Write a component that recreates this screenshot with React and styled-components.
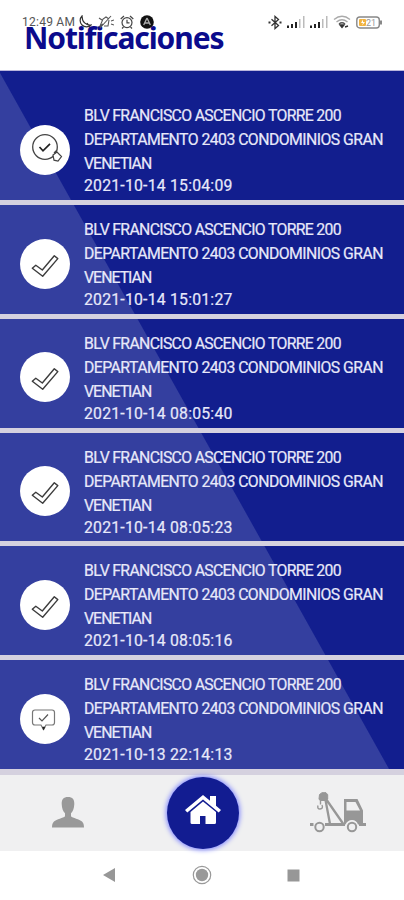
import React from 'react';
import styled, { createGlobalStyle } from 'styled-components';

const Global = createGlobalStyle`
  * { box-sizing: border-box; }
  body { margin: 0; background: #fff; font-family: Roboto, "Liberation Sans", sans-serif; }
  svg { display: block; flex: none; }
`;
const Screen = styled.div`
  width: 404px; height: 900px; display: flex; flex-direction: column;
  position: relative; overflow: hidden; background: #fff;
`;
const StatusBar = styled.div`
  position: absolute; inset: 0 0 auto 0; height: 44px; padding: 0 21px 0 22px;
  display: flex; align-items: center; color: #555;
`;
const Clock = styled.span`
  font: 400 12px/16px Roboto, sans-serif; letter-spacing: 0.25px; width: 56px; white-space: nowrap;
`;
const StatusIcons = styled.div`
  display: flex; align-items: center; gap: ${p => p.$gap}px; margin-left: ${p => p.$push ? 'auto' : '0'};
`;
const Header = styled.header`
  height: 71px; padding: 17px 0 0 24px; flex: none; border-bottom: 1px solid #b9b6dc;
`;
const Title = styled.h1`
  margin: 0; color: #0b0b8c; white-space: nowrap;
  font: 700 30px/42px "Noto Sans", sans-serif; letter-spacing: -1.1px;
`;
const List = styled.main`
  flex: none; height: 704px;
  background: linear-gradient(60.8deg, #343f9f 342px, #121e8e 343px);
`;
const Row = styled.article`
  height: ${p => p.$first ? 134 : 113.8}px; padding: ${p => p.$first ? 33 : 13}px 0 0 20px;
  display: flex; align-items: flex-start; gap: 14px;
  border-bottom: 5px solid #d5d1df;
  &:last-child { height: 114.8px; border-bottom-width: 6px; }
`;
const Badge = styled.div`
  width: 50px; height: 50px; margin-top: 20.5px; border-radius: 50%; background: #fff; flex: none;
  display: flex; align-items: center; justify-content: center;
`;
const Body = styled.div`display: flex; flex-direction: column; color: #e8e9fa;`;
const Line = styled.span`
  font: 400 15.8px/${p => p.$short ? 20 : 24}px Roboto, sans-serif;
  letter-spacing: ${p => p.$track}px; white-space: nowrap;
  -webkit-text-stroke: 0.2px #e8e9fa;
`;
const TabBar = styled.nav`
  height: 76px; flex: none; background: #f0f0f1; display: grid;
  grid-template-columns: 136px 134px 136px; align-items: center; justify-items: center;
  & > svg { margin-bottom: 2px; }
`;
const HomeButton = styled.div`
  width: 72px; height: 72px; border-radius: 50%; background: #121c91;
  box-shadow: 0 0 5px 1px #7b82ff; display: flex; align-items: center; justify-content: center;
  & > svg { margin-bottom: 7px; }
`;
const SystemNav = styled.div`
  height: 49px; flex: none; display: flex; align-items: center; justify-content: center;
  gap: 75px; padding-right: 3px; padding-bottom: 1px;
`;

const Moon = () => <svg width="14" height="14" viewBox="0 0 14 14" fill="none" stroke="#333" strokeWidth="1.2"><path d="M4 1a6.3 6.3 0 1 0 9 9C8 10.5 4 7 4 1ZM9 8l3 4" /></svg>;
const Muted = () => <svg width="16" height="14" viewBox="0 0 16 14" fill="none" stroke="#555" strokeWidth="1.1"><path d="M2 13 13 1M5 9l-3 2 3-7 3-2 3 2M11 5l-1 6H6M13 6l3-1M13 9l3 1M1 3l3 2" /></svg>;
const Alarm = () => <svg width="14" height="14" viewBox="0 0 14 14" fill="none" stroke="#444" strokeWidth="1.2"><circle cx="7" cy="7.6" r="5" /><path d="M.7 4 4 1M13.3 4 10 1M7 4.8v3h2.5M3.5 12 2 13.5M10.5 12l1.5 1.5" /></svg>;
const Disc = () => <svg width="14" height="14" viewBox="0 0 14 14"><circle cx="7" cy="7" r="6.8" fill="#111" /><path d="M7 3 3.7 10M7 3l3.3 7M5 8h4" fill="none" stroke="#aaa" strokeWidth="1.4" /></svg>;
const Bluetooth = () => <svg width="14" height="15" viewBox="0 0 14 15" fill="none" stroke="#333" strokeWidth="1.3"><path d="m3.5 4.2 7 6.4L7 13.5v-12l3.5 3-7 6.3" /><path d="M.5 7.5h2M11.5 7.5h2" strokeWidth="2" /></svg>;
const Signal = () => (
  <svg width="18" height="12" viewBox="0 0 18 12">
    <path d="M0 9.5h2V12H0zM4 8h2v4H4zM8 6h2v6H8z" fill="#222" />
    <path d="M12 3h1.5v9H12zM16 0h1.5v12H16z" fill="#bbb" />
  </svg>
);
const Wifi = () => (
  <svg width="18" height="14" viewBox="0 0 18 14" fill="none" strokeWidth="1.4">
    <path d="M1 4.5q8-6.5 16 0M3.5 7q5.5-4.5 11 0" stroke="#aaa" />
    <path d="M6 9q3-2.5 6 0" stroke="#555" /><path d="m7 10 4 0-2 2.5zM12 12l3-1" fill="#333" stroke="#333" />
  </svg>
);
const Battery = () => (
  <svg width="27" height="13" viewBox="0 0 27 13">
    <rect x=".8" y="1" width="22.5" height="11" rx="3" fill="#fff" stroke="#888" strokeWidth="1.4" />
    <path d="M24 4.5h2v4h-2z" fill="#888" /><rect x="3" y="3" width="7" height="7" rx="1" fill="#f2b340" />
    <path d="M7 3.5 5 7h2L6 9.5 9 6H7z" fill="#fff" />
    <text x="10" y="10" fontFamily="Roboto, sans-serif" fontSize="9" fill="#999">21</text>
  </svg>
);

const SearchCheck = () => (
  <svg width="50" height="50" viewBox="0 0 50 50" fill="none" stroke="#444">
    <circle cx="25" cy="22" r="12.3" strokeWidth="1.3" />
    <path d="m19.5 22 3.5 3.8 7-7" stroke="#222" strokeWidth="1.7" />
    <path d="m33 30 4-3 4.500 4.500-3.500 4.500-4-.8zM34 28l2.500-2.500" strokeWidth="1.200" fill="#fff" />
  </svg>
);
const Check = () => (
  <svg width="50" height="50" viewBox="0 0 50 50" fill="none" stroke="#3c3c3c" strokeWidth="1.4" strokeLinejoin="round">
    <path d="M12.300 29.200 15.800 26.200 22.300 31 34.300 16.800 37.800 19.600 22.700 37.300Z" />
  </svg>
);
const ChatCheck = () => (
  <svg width="50" height="50" viewBox="0 0 50 50" fill="none" stroke="#777" strokeWidth="1.2">
    <path d="M15 16h17q2.500 0 2.500 2.500v10q0 2.500-2.500 2.500h-6l-2.500 4.500L21 31h-6q-2.500 0-2.500-2.500v-10Q12.500 16 15 16Z" />
    <path d="m19 24 3 3 6-6.500" stroke="#555" /><path d="m22.500 33 1 3 1.500-3z" fill="#222" stroke="#222" strokeWidth=".5" />
  </svg>
);
const icons = { search: SearchCheck, check: Check, chat: ChatCheck };

const Person = () => (
  <svg width="32" height="31" viewBox="0 0 32 31">
    <path d="M16 0c4.500 0 6.500 2.500 6.300 7-.1 4.500-1.500 7.500-3.300 9.300v3c1.500 2 8.500 2.700 11 5.300 1.500 1.500 2 3.500 2 5.900H0c0-2.400.5-4.400 2-5.900 2.500-2.600 9.500-3.300 11-5.300v-3C11.200 14.500 9.800 11.500 9.700 7 9.500 2.500 11.500 0 16 0Z" fill="#999" />
  </svg>
);
const House = () => (
  <svg width="36" height="30" viewBox="0 0 36 30" fill="#fff">
    <path d="M18 0 0 15l2.300 2.500L18 4.500l15.700 13L36 15l-5-4.300V1h-6v4.800z" />
    <path d="M18 6.500 5.500 17v10.500Q5.500 29 7 29h8v-8h5.500v8h9q1.500 0 1.500-1.500V17z" />
  </svg>
);
const TowTruck = () => (
  <svg width="56" height="41" viewBox="0 0 56 41" fill="none" stroke="#979797">
    <path d="M9.500 2.500 12 .7h4l1.700 2V7l-2 1.500H10L9 7z" fill="#979797" strokeWidth="1" />
    <path d="M10.500 8.500v4M8 13.500q-1 3.500 2 3.500 3.500-.3 2-4" strokeWidth="1.400" />
    <path d="m16 7 17 24.500M15.500 8l4.500 24" strokeWidth="2.300" />
    <path d="M0 32.500h3.500M15 32.500h20M49 32.500h7" strokeWidth="3" />
    <path fillRule="evenodd" d="M34 7h13.500L53 18.500v14h-5Q46.500 28 42 28t-6.500 4.500H34zM36.500 10v8.500H50L45.500 10z" fill="#979797" stroke="none" />
    <circle cx="9.500" cy="35" r="4.200" strokeWidth="2" /><circle cx="42" cy="35" r="4.200" strokeWidth="2" />
  </svg>
);

const items = [
  { icon: 'search', date: '2021-10-14 15:04:09' },
  { icon: 'check', date: '2021-10-14 15:01:27' },
  { icon: 'check', date: '2021-10-14 08:05:40' },
  { icon: 'check', date: '2021-10-14 08:05:23' },
  { icon: 'check', date: '2021-10-14 08:05:16' },
  { icon: 'chat', date: '2021-10-13 22:14:13' },
];

function Notification({ item, first }) {
  const Icon = icons[item.icon];
  return (
    <Row $first={first}>
      <Badge><Icon /></Badge>
      <Body>
        <Line $track={-0.67}>BLV FRANCISCO ASCENCIO TORRE 200</Line>
        <Line $track={-0.55}>DEPARTAMENTO 2403 CONDOMINIOS GRAN</Line>
        <Line $track={-0.95}>VENETIAN</Line>
        <Line $short $track={0.21}>{item.date}</Line>
      </Body>
    </Row>
  );
}

export default function App() {
  return (
    <Screen>
      <Global />
      <Header><Title>Notificaciones</Title></Header>
      <List>{items.map((item, i) => <Notification key={item.date} item={item} first={i === 0} />)}</List>
      <TabBar>
        <Person />
        <HomeButton><House /></HomeButton>
        <TowTruck />
      </TabBar>
      <SystemNav>
        <svg width="16" height="16" viewBox="0 0 16 16"><path d="M14 1v14L2 8z" fill="#979797" /></svg>
        <svg width="20" height="20" viewBox="0 0 20 20"><circle cx="10" cy="10" r="8.700" fill="none" stroke="#999" strokeWidth="1.200" /><circle cx="10" cy="10" r="6.200" fill="#999" /></svg>
        <svg width="13" height="13" viewBox="0 0 13 13"><path d="M.5.5h12v12H.5z" fill="#979797" /></svg>
      </SystemNav>
      <StatusBar>
        <Clock>12:49 AM</Clock>
        <StatusIcons $gap={6}><Moon /><Muted /><Alarm /><Disc /></StatusIcons>
        <StatusIcons $gap={5} $push><Bluetooth /><Signal /><Signal /><Wifi /><Battery /></StatusIcons>
      </StatusBar>
    </Screen>
  );
}
